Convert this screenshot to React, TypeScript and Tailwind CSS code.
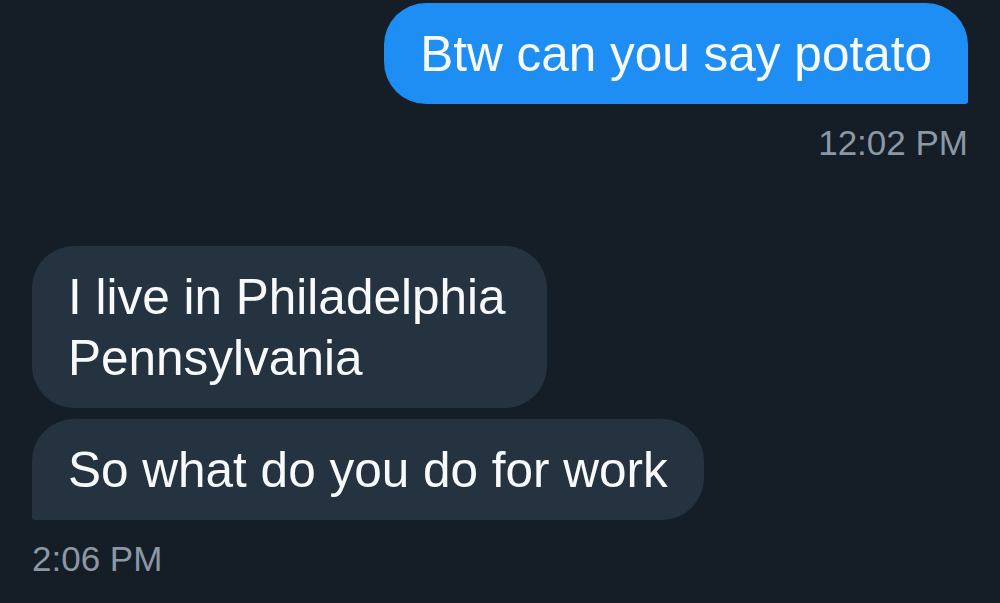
import React from 'react';

type Msg = { text: string; maxW?: string };

const App: React.FC = () => {
  const theirs: Msg[] = [
    { text: 'I live in Philadelphia Pennsylvania', maxW: 'max-w-[515px]' },
    { text: 'So what do you do for work' },
  ];

  return (
    <div
      className="w-[1000px] h-[603px] overflow-hidden bg-[#151d26] px-8 pt-[3px]"
      style={{ fontFamily: '"Liberation Sans", Arial, sans-serif' }}
    >
      {/* outgoing */}
      <div className="flex flex-col items-end">
        <div className="bg-[#1e8ef5] text-[#f7f9fa] text-[49.5px] leading-[61px] px-9 py-5 rounded-[42px] rounded-br-[3px]">
          Btw can you say potato
        </div>
        <span className="mt-[18px] text-[35px] leading-[42px] text-[#8b98a5]">12:02 PM</span>
      </div>

      {/* incoming */}
      <div className="mt-[82px] flex flex-col items-start gap-[11px]">
        {theirs.map((m, i) => (
          <div
            key={i}
            className={`bg-[#253341] text-[#f7f9fa] text-[49.5px] leading-[61px] px-9 py-5 rounded-[42px] ${
              i === theirs.length - 1 ? 'rounded-bl-[3px]' : ''
            } ${m.maxW ?? ''}`}
          >
            {m.text}
          </div>
        ))}
      </div>
      <div className="mt-[18px] text-[35px] leading-[42px] text-[#8b98a5]">2:06 PM</div>
    </div>
  );
};

export default App;
